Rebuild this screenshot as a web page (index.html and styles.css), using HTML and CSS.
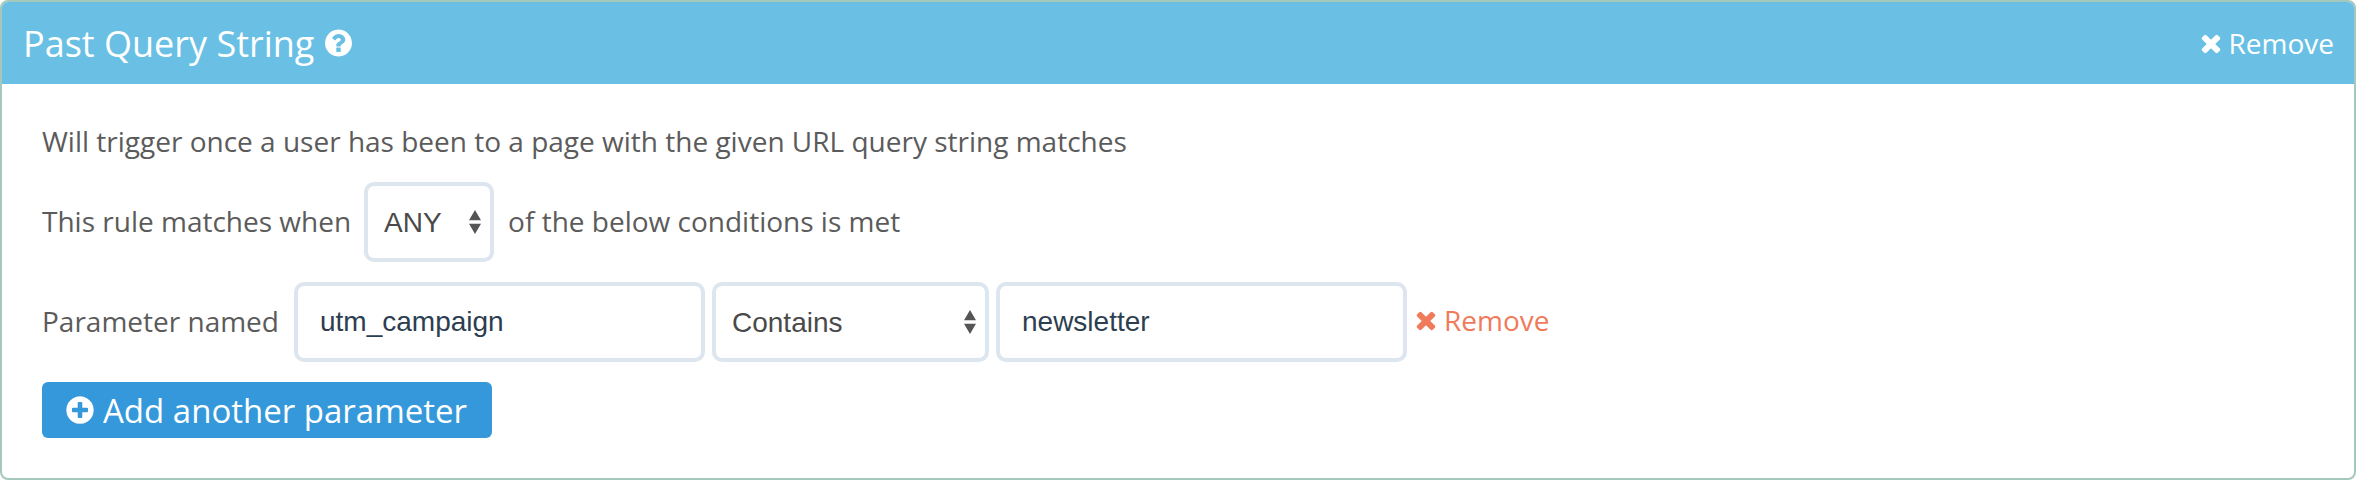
FILE: index.html
```html
<!DOCTYPE html>
<html>
<head>
  <meta charset="utf-8">
  <link rel="stylesheet" href="styles.css">
</head>
<body>
  <div class="rule-card">
    <div class="rule-header">
      <h1 class="rule-title">Past Query String
        <svg class="icon icon-help" viewBox="0 0 1536 1792"><path d="M896 1376v-192q0-14-9-23t-23-9h-192q-14 0-23 9t-9 23v192q0 14 9 23t23 9h192q14 0 23-9t9-23zm256-672q0-88-55.500-163t-138.500-116-170-41q-243 0-371 213-15 24 8 42l132 100q7 6 19 6 16 0 25-12 53-68 86-92 34-24 86-24 48 0 85.500 26t37.500 59q0 38-20 61t-68 45q-63 28-115.500 86.500t-52.500 125.500v36q0 14 9 23t23 9h192q14 0 23-9t9-23q0-19 21.500-49.500t54.500-49.500q32-18 49-28.500t46-35 44.500-48 28-60.500 12.500-81zm384 192q0 209-103 385.500t-279.500 279.500-385.500 103-385.500-103-279.500-279.500-103-385.500 103-385.500 279.500-279.500 385.500-103 385.500 103 279.500 279.500 103 385.500z"/></svg>
      </h1>
      <a class="remove-link header-remove">
        <svg class="icon icon-times" viewBox="0 0 1408 1792"><path d="M1298 1322q0 40-28 68l-136 136q-28 28-68 28t-68-28l-294-294-294 294q-28 28-68 28t-68-28l-136-136q-28-28-28-68t28-68l294-294-294-294q-28-28-28-68t28-68l136-136q28-28 68-28t68 28l294 294 294-294q28-28 68-28t68 28l136 136q28 28 28 68t-28 68l-294 294 294 294q28 28 28 68z"/></svg>
        Remove
      </a>
    </div>

    <div class="rule-body">
      <p class="rule-desc">Will trigger once a user has been to a page with the given URL query string matches</p>

      <div class="form-row match-row">
        <span class="row-label">This rule matches when</span>
        <span class="select-wrap select-any">
          <select class="field field-select"><option>ANY</option><option>ALL</option></select>
          <svg class="select-arrows" viewBox="0 0 14 26"><path d="M7 0l6.500 11H.5zM7 26L.5 15h13z"/></svg>
        </span>
        <span class="row-label">of the below conditions is met</span>
      </div>

      <div class="form-row param-row">
        <span class="row-label param-label">Parameter named</span>
        <input class="field field-text" type="text" value="utm_campaign">
        <span class="select-wrap select-op">
          <select class="field field-select"><option>Contains</option><option>Equals</option></select>
          <svg class="select-arrows" viewBox="0 0 14 26"><path d="M7 0l6.500 11H.5zM7 26L.5 15h13z"/></svg>
        </span>
        <input class="field field-text" type="text" value="newsletter">
        <a class="remove-link param-remove">
          <svg class="icon icon-times" viewBox="0 0 1408 1792"><path d="M1298 1322q0 40-28 68l-136 136q-28 28-68 28t-68-28l-294-294-294 294q-28 28-68 28t-68-28l-136-136q-28-28-28-68t28-68l294-294-294-294q-28-28-28-68t28-68l136-136q28-28 68-28t68 28l294 294 294-294q28-28 68-28t68 28l136 136q28 28 28 68t-28 68l-294 294 294 294q28 28 28 68z"/></svg>
          Remove
        </a>
      </div>

      <button class="add-button">
        <svg class="icon icon-plus" viewBox="0 0 1536 1792"><path d="M1216 960v-128q0-26-19-45t-45-19h-256v-256q0-26-19-45t-45-19h-128q-26 0-45 19t-19 45v256h-256q-26 0-45 19t-19 45v128q0 26 19 45t45 19h256v256q0 26 19 45t45 19h128q26 0 45-19t19-45v-256h256q26 0 45-19t19-45zm320-64q0 209-103 385.500t-279.500 279.500-385.500 103-385.500-103-279.500-279.500-103-385.500 103-385.500 279.500-279.500 385.500-103 385.500 103 279.500 279.500 103 385.500z"/></svg>
        Add another parameter
      </button>
    </div>
  </div>
</body>
</html>
```

FILE: styles.css
```css
* {
  box-sizing: border-box;
}

body {
  margin: 0;
  font-family: 'Open Sans', 'Liberation Sans', sans-serif;
  font-size: 28px;
  color: #5b5b5b;
  background: white;
}

.rule-card {
  height: 480px;
  border: 2px solid #a5c8bd;
  border-radius: 8px;
  overflow: hidden;
}

.rule-header {
  display: flex;
  justify-content: space-between;
  align-items: center;
  height: 82px;
  padding: 0 20px 0 21px;
  background: #69c0e4;
  color: white;
}

.rule-title {
  display: flex;
  align-items: center;
  gap: 11px;
  margin: 0;
  font-size: 36px;
  font-weight: 400;
}

.icon {
  fill: currentColor;
  flex: none;
}

.icon-help {
  width: 27px;
  height: 32px;
}

.icon-times {
  width: 22px;
  height: 28px;
}

.icon-plus {
  width: 28px;
  height: 32px;
}

.remove-link {
  display: flex;
  align-items: center;
  gap: 7px;
  font-size: 28px;
}

.rule-body {
  padding: 38px 40px 0;
}

.rule-desc {
  margin: 0 0 22px;
  line-height: 38px;
}

.form-row {
  display: flex;
  align-items: center;
  height: 80px;
}

.row-label {
  margin-bottom: 3px;
}

.match-row {
  gap: 14px;
  margin-bottom: 20px;
}

.param-row {
  gap: 7px;
  margin-bottom: 20px;
}

.param-label {
  margin-right: 8px;
}

.field {
  height: 80px;
  border: 4px solid #dde6ee;
  border-radius: 10px;
  background: white;
  font-family: 'Liberation Sans', Arial, sans-serif;
  font-size: 28px;
  outline: none;
}

.field-text {
  width: 411px;
  padding: 0 22px;
  color: #2c3e50;
}

.field-select {
  width: 100%;
  padding: 0 16px;
  color: #4a4a4a;
  appearance: none;
  -webkit-appearance: none;
}

.select-wrap {
  position: relative;
  display: block;
}

.select-any {
  width: 130px;
  margin-left: -1px;
}

.select-op {
  width: 277px;
}

.select-arrows {
  position: absolute;
  top: 28px;
  right: 12px;
  width: 14px;
  height: 24px;
  fill: #555;
  pointer-events: none;
}

.param-remove {
  color: #ef7b5b;
  margin: 0 0 5px 1px;
}

.add-button {
  display: flex;
  align-items: center;
  gap: 9px;
  width: 450px;
  height: 56px;
  padding: 0 24px;
  border: none;
  border-radius: 6px;
  background: #3498db;
  color: white;
  font-family: inherit;
  font-size: 33px;
}
```
